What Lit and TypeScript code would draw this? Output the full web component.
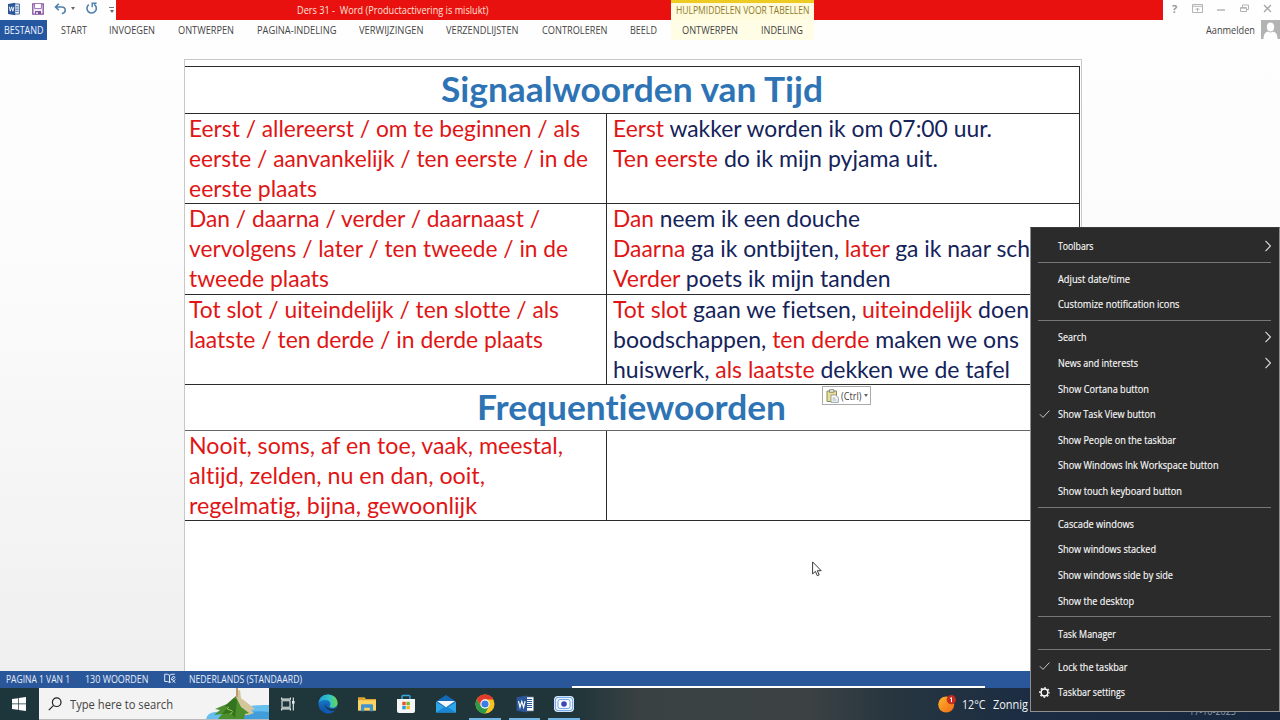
import { LitElement, css, html, nothing, svg } from "lit";
import { customElement, property } from "lit/decorators.js";

// Text that is condensed or widened to fill a known width
@customElement("fit-text")
export class FitText extends LitElement {
  @property({ type: Number }) width = 0;

  firstUpdated() {
    const inner = this.renderRoot.querySelector("span")!;
    const natural = inner.getBoundingClientRect().width;
    if (!natural || !this.width) return;
    inner.style.transform = `scaleX(${this.width / natural})`;
    this.style.width = `${this.width}px`;
  }

  render() {
    return html`<span><slot></slot></span>`;
  }

  static styles = css`
    :host {
      display: block;
      flex: none;
      white-space: nowrap;
    }
    span {
      display: inline-block;
      transform-origin: 0 50%;
    }
  `;
}

const fit = (text: string, width: number) => html`<fit-text width=${width}>${text}</fit-text>`;

const tabs: [string, number][] = [
  ["START", 26],
  ["INVOEGEN", 46],
  ["ONTWERPEN", 56],
  ["PAGINA-INDELING", 79.5],
  ["VERWIJZINGEN", 64.5],
  ["VERZENDLIJSTEN", 72.5],
  ["CONTROLEREN", 65.5],
  ["BEELD", 27],
];

type Line = { w: number; parts: string[] };

// Parts alternate between signal words (red) and plain words (navy)
const rows: { left: [string, number][]; right: Line[]; tall?: boolean }[] = [
  {
    left: [
      ["Eerst / allereerst / om te beginnen / als", 391],
      ["eerste / aanvankelijk / ten eerste / in de", 399],
      ["eerste plaats", 128],
    ],
    right: [
      { w: 379, parts: ["Eerst", " wakker worden ik om 07:00 uur."] },
      { w: 325, parts: ["Ten eerste", " do ik mijn pyjama uit."] },
    ],
  },
  {
    tall: true,
    left: [
      ["Dan / daarna / verder / daarnaast /", 351],
      ["vervolgens / later / ten tweede / in de", 379],
      ["tweede plaats", 140],
    ],
    right: [
      { w: 247, parts: ["Dan", " neem ik een douche"] },
      { w: 417, parts: ["Daarna", " ga ik ontbijten, ", "later", " ga ik naar sch"] },
      { w: 277.5, parts: ["Verder", " poets ik mijn tanden"] },
    ],
  },
  {
    left: [
      ["Tot slot / uiteindelijk / ten slotte / als", 370],
      ["laatste / ten derde / in derde plaats", 354],
    ],
    right: [
      { w: 416, parts: ["Tot slot", " gaan we fietsen, ", "uiteindelijk", " doen"] },
      { w: 406, parts: ["", "boodschappen, ", "ten derde", " maken we ons"] },
      { w: 397, parts: ["", "huiswerk, ", "als laatste", " dekken we de tafel"] },
    ],
  },
];

const frequency: [string, number][] = [
  ["Nooit, soms, af en toe, vaak, meestal,", 374],
  ["altijd, zelden, nu en dan, ooit,", 296],
  ["regelmatig, bijna, gewoonlijk", 288],
];

type Item = { text: string; w: number; arrow?: boolean; icon?: "check" | "gear" };

const groups: Item[][] = [
  [{ text: "Toolbars", w: 35.5, arrow: true }],
  [
    { text: "Adjust date/time", w: 72 },
    { text: "Customize notification icons", w: 121.5 },
  ],
  [
    { text: "Search", w: 28.5, arrow: true },
    { text: "News and interests", w: 80, arrow: true },
    { text: "Show Cortana button", w: 91 },
    { text: "Show Task View button", w: 97.5, icon: "check" },
    { text: "Show People on the taskbar", w: 118 },
    { text: "Show Windows Ink Workspace button", w: 160.5 },
    { text: "Show touch keyboard button", w: 124 },
  ],
  [
    { text: "Cascade windows", w: 76 },
    { text: "Show windows stacked", w: 98 },
    { text: "Show windows side by side", w: 115 },
    { text: "Show the desktop", w: 76 },
  ],
  [{ text: "Task Manager", w: 58 }],
  [
    { text: "Lock the taskbar", w: 69.5, icon: "check" },
    { text: "Taskbar settings", w: 67, icon: "gear" },
  ],
];

const checkIcon = svg`<path d="M.8 5.2 4 8.4 10.4 1.6" fill="none" stroke="#c8c8c8" stroke-width="1"/>`;
const gearIcon = svg`
  <circle cx="5.5" cy="5.5" r="3.4" fill="none" stroke="#fff" stroke-width="1.5"/>
  <circle cx="5.5" cy="5.5" r="4.6" fill="none" stroke="#fff" stroke-width="1.4" stroke-dasharray="1.8 1.81" stroke-dashoffset=".9"/>`;

const wordSmall = html`<svg width="14" height="14" viewBox="0 0 14 14">
  <path d="M7 2h5.4v10H7z" fill="#fff" stroke="#2b579a" stroke-width=".9"/>
  <path d="M8.5 4.3h3M8.5 6h3M8.5 7.7h3M8.5 9.4h3" stroke="#2b579a" stroke-width=".8"/>
  <path d="M1 2 8.2.8v12.4L1 12z" fill="#2b579a"/>
  <path d="m2.3 4.7 1 4.5 1.3-4.4L5.9 9.2l1-4.5" fill="none" stroke="#fff" stroke-width=".9"/>
</svg>`;

const saveIcon = html`<svg width="12" height="12" viewBox="0 0 12 12">
  <path d="M.8.8h10.4v10.4H.8z" fill="#f7f1fb" stroke="#80509c" stroke-width="1.3"/>
  <path d="M2.6 1v4.6h6.8V1" fill="#fff" stroke="#80509c" stroke-width=".8"/>
  <path d="M3 11V8h6v3z" fill="#80509c"/><path d="M4.3 9h1.4v2H4.3z" fill="#fff"/>
</svg>`;

const undoIcon = html`<svg width="13" height="12" viewBox="0 0 13 12">
  <path d="M4.8.8 1.5 4 4.8 7.3M1.8 4h5.7c5 0 4.8 6 .3 6.6" fill="none" stroke="#4f80ac" stroke-width="1.6"/>
</svg>`;

const redoIcon = html`<svg width="13" height="13" viewBox="0 0 13 13">
  <path d="M3.8 2.6a4.7 4.7 0 1 0 5.4-.2" fill="none" stroke="#4f80ac" stroke-width="1.6"/>
  <path d="M7.2 5.3V1.2h4.4" fill="none" stroke="#4f80ac" stroke-width="1.4"/>
</svg>`;

const taskIcons = [
  // task view
  html`<svg width="16" height="16" viewBox="0 0 16 16" fill="none" stroke="#e8eeee" stroke-width="1.1">
    <path d="M2 4.8h8v6.4H2zM1.6 1.5v1.6h8.8V1.5M1.6 14.5v-1.6h8.8v1.6M13.3 1.5v13"/>
    <path d="M12 5h2.6v2.6H12z" fill="#e8eeee" stroke="none"/>
  </svg>`,
  // edge
  html`<svg width="20" height="20" viewBox="0 0 20 20">
    <defs>
      <linearGradient id="edge-a" x1="0" x2="1"><stop stop-color="#1b9de2"/><stop offset=".6" stop-color="#36c5c0"/><stop offset="1" stop-color="#67d84c"/></linearGradient>
      <linearGradient id="edge-b" x2="0" y2="1"><stop stop-color="#1b8ad8"/><stop offset="1" stop-color="#114a9c"/></linearGradient>
    </defs>
    <circle cx="10" cy="10" r="9.6" fill="url(#edge-b)"/>
    <path d="M.5 9C1 3.6 5 .4 10 .4c5.6 0 9.6 4 9.6 8.5 0 3-2.4 4.8-5 4.8-2 0-3.3-.7-3-1.5.5-.9.8-1.4.8-2.3C12.4 7.5 10 6 7.2 6 4 6 1.5 7.4.5 9z" fill="url(#edge-a)"/>
    <path d="M7.4 9.8C6.7 14 10 17.4 14.6 16.8c1.4-.2 2.6-.6 3.4-1.2C16.2 18.3 13.3 19.6 10 19.6 6 19 3.7 14.6 7.4 9.8z" fill="#0f5bb5"/>
    <path d="M9 8.6c-1.5 1.4-1.4 4 1 5.4 3 1.7 6.5 1.4 8.9-.2l1.1 1.4-1.8 1C13.5 18 8 15.5 7.4 11.5z" fill="#1f3338"/>
  </svg>`,
  // explorer
  html`<svg width="18" height="16" viewBox="0 0 18 16">
    <path d="M0 1.2h6.5L8 3h10v11.5H0z" fill="#dca52f"/>
    <path d="M0 4.2h18v10.3H0z" fill="#fcd363"/>
    <path d="M3 15.2V9.2q0-1 1-1h10q1 0 1 1v6h-3.2v-3.4H6.2v3.4z" fill="#3f93cf"/>
  </svg>`,
  // store
  html`<svg width="18" height="20" viewBox="0 0 18 20">
    <path d="M5 6V2.5q0-1 1-1h6q1 0 1 1V6" fill="none" stroke="#35a8df" stroke-width="1.4"/>
    <path d="M0 5h18v12q0 2-2 2H2q-2 0-2-2z" fill="#f4f6f6"/>
    <path d="M5.3 7.8h3.4v3.4H5.3z" fill="#e9502c"/><path d="M9.4 7.8h3.4v3.4H9.4z" fill="#78b72a"/>
    <path d="M5.3 11.9h3.4v3.4H5.3z" fill="#249edb"/><path d="M9.4 11.9h3.4v3.4H9.4z" fill="#f5b719"/>
  </svg>`,
  // mail
  html`<svg width="20" height="18" viewBox="0 0 20 18">
    <path d="M0 6.5 10 0l10 6.5V17H0z" fill="#1468b4"/>
    <path d="M0 6.8 10 13l10-6.2V17.5H0z" fill="#2da5e8"/>
    <path d="M0 17.5 10 11l10 6.5z" fill="#1a86d3"/>
    <path d="M1 6 19 6 10 12.2z" fill="#f3f9fd"/>
  </svg>`,
  // chrome
  html`<svg width="20" height="20" viewBox="0 0 20 20">
    <circle cx="10" cy="10" r="9.5" fill="#f9c31f"/>
    <path d="M1.77 5.25A9.5 9.5 0 0 0 10 19.5L14 12.3 6 12.3z" fill="#2b9b49"/>
    <path d="M10 5.5h8.4A9.5 9.5 0 0 0 1.77 5.25L6 12z" fill="#e23b2e"/>
    <circle cx="10" cy="10" r="4.7" fill="#fff"/><circle cx="10" cy="10" r="3.6" fill="#3b7de4"/>
  </svg>`,
  // word
  html`<svg width="18" height="18" viewBox="0 0 18 18">
    <path d="M9 2.2h8.3v13.6H9z" fill="#fff" stroke="#b8c7e0" stroke-width=".6"/>
    <path d="M11 4.5h5M11 6.5h5M11 8.5h5M11 10.5h5M11 12.5h5" stroke="#2b579a" stroke-width="1"/>
    <path d="M.5 2.2 11 .5v17L.5 15.8z" fill="#2b579a"/>
    <path d="m2.5 6.2 1.5 6 1.8-5.8L7.6 12.2l1.5-6" fill="none" stroke="#fff" stroke-width="1.2"/>
  </svg>`,
  // recorder
  html`<svg width="20" height="16" viewBox="0 0 20 16">
    <rect width="20" height="16" rx="4" fill="#e9f4ff"/>
    <rect x="1.3" y="1.3" width="17.4" height="13.4" rx="3" fill="none" stroke="#5c9be8" stroke-width="1"/>
    <rect x="4" y="3.6" width="12" height="8.8" rx="2" fill="#fff" stroke="#6f9fe0" stroke-width="1"/>
    <circle cx="10" cy="8" r="2.8" fill="#3949b5"/>
  </svg>`,
];

@customElement("app-root")
export class AppRoot extends LitElement {
  renderTitleBar() {
    return html`
      <div class="titlebar">
        <div class="quick">
          ${wordSmall}${saveIcon}
          <span class="undo">${undoIcon}<i class="caret"></i></span>
          ${redoIcon}
          <span class="more"><i></i><i class="caret"></i></span>
        </div>
        <div class="red title">${fit("Ders 31 - \u00a0Word (Productactivering is mislukt)", 191.5)}</div>
        <div class="tools">${fit("HULPMIDDELEN VOOR TABELLEN", 133.5)}</div>
        <div class="red rest"></div>
        <div class="controls">
          <b>?</b>
          <svg width="11" height="9" viewBox="0 0 11 9" fill="none" stroke="#b4b4b4"><path d="M.5.5h10v8H.5zM.5 2.3h10M3.5 6l2-2 2 2M5.5 4v3.5"/></svg>
          <svg width="8" height="9" viewBox="0 0 8 9" stroke="#b0b0b0" stroke-width="1.4"><path d="M0 6h8"/></svg>
          <svg width="9" height="9" viewBox="0 0 9 9" fill="none" stroke="#b4b4b4"><path d="M.5 3.5h6v4h-6zM2.5 3V1h6v4.5h-2M.5 4.2h6"/></svg>
          <svg width="9" height="9" viewBox="0 0 9 9" stroke="#a5a5a5" stroke-width="1.3"><path d="m1 1 7 7M8 1 1 8"/></svg>
        </div>
      </div>
    `;
  }

  renderTabs() {
    return html`
      <nav class="tabs">
        <div class="file">${fit("BESTAND", 39.5)}</div>
        <div class="tablist">${tabs.map(([t, w]) => fit(t, w))}</div>
        <div class="tooltabs">${fit("ONTWERPEN", 56)}${fit("INDELING", 42)}</div>
        <div class="account">
          ${fit("Aanmelden", 49)}
          <svg width="19" height="19" viewBox="0 0 19 19">
            <path d="M0 0h19v19H0z" fill="#b3b3b3"/>
            <path d="M2.5 19q0-7 4.5-7.5h5q4.5.5 4.5 7.5z" fill="#fff"/>
            <ellipse cx="9.5" cy="7" rx="4.2" ry="5" fill="#fff" stroke="#b3b3b3"/>
          </svg>
        </div>
      </nav>
    `;
  }

  renderTable() {
    return html`
      <div class="table">
        <div class="head first">${fit("Signaalwoorden van Tijd", 382)}</div>
        ${rows.map(
          (row) => html`
            <div class="row ${row.tall ? "tall" : ""}">
              <div class="cell signal">${row.left.map(([t, w]) => fit(t, w))}</div>
              <div class="cell plain">
                ${row.right.map(
                  (line) => html`<fit-text width=${line.w}>${line.parts.map((p, i) =>
                    i % 2 ? p : html`<span class="signal">${p}</span>`
                  )}</fit-text>`
                )}
              </div>
            </div>
          `
        )}
        <div class="head second">${fit("Frequentiewoorden", 309)}</div>
        <div class="row">
          <div class="cell signal">${frequency.map(([t, w]) => fit(t, w))}</div>
          <div class="cell"></div>
        </div>
      </div>
    `;
  }

  renderItem(item: Item) {
    return html`
      <div class="item">
        <svg width="11" height="11" viewBox="0 0 11 11">
          ${item.icon === "check" ? checkIcon : item.icon === "gear" ? gearIcon : nothing}
        </svg>
        ${fit(item.text, item.w)}
        ${item.arrow
          ? html`<svg class="arrow" width="6" height="12" viewBox="0 0 6 12"><path d="m.5.8 5 5.2-5 5.2" fill="none" stroke="#ddd" stroke-width="1.1"/></svg>`
          : nothing}
      </div>
    `;
  }

  renderTaskbar() {
    return html`
      <footer class="taskbar">
        <div class="start">
          <svg width="14" height="14" viewBox="0 0 14 14" fill="#fff">
            <path d="M0 2 6 1.2v5.4H0zM6.7 1.1 14 0v6.6H6.7zM0 7.3h6v5.5L0 12zM6.7 7.3H14V14l-7.3-1.1z"/>
          </svg>
        </div>
        <div class="search">
          <svg width="14" height="14" viewBox="0 0 14 14" fill="none" stroke="#222" stroke-width="1.2">
            <circle cx="8.7" cy="5.2" r="4.3"/><path d="M5.6 8.3.8 13.2"/>
          </svg>
          ${fit("Type here to search", 103)}
          <svg class="art" width="64" height="31" viewBox="0 0 64 31">
            <path d="M1 31q1-6 9-7 14-1 22-1 10-7 32-6v14z" fill="#67bff0"/>
            <path d="M32 29q14-8 32-5v7H32z" fill="#429ddb"/>
            <path d="M31 3l4-1 1 8 14 11-4 1 3 3q-8 4-16 1z" fill="#d4c59b"/>
            <path d="M31 8 22 16l-12 5 5 1-6 5 8-1-4 5h26l1-5 4-1-8-6-4-8z" fill="#4c8f2c"/>
            <path d="M29 10 20 18l3 1-6 7 9-1 4 5 2-18z" fill="#35741f"/>
            <path d="M31 0h2v9h-2z" fill="#bf9872"/>
            <path d="M24 19q-4 2 1 3t0 4" fill="none" stroke="#a6c957"/>
          </svg>
        </div>
        <div class="apps">
          ${taskIcons.map((icon, i) => html`<div class="app ${i > 4 ? "open" : ""}">${icon}</div>`)}
        </div>
        <div class="weather">
          <svg width="18" height="18" viewBox="0 0 18 18">
            <defs><linearGradient id="sun" x2="1" y2="1"><stop stop-color="#ffb52b"/><stop offset="1" stop-color="#f06a16"/></linearGradient></defs>
            <circle cx="8.2" cy="9.5" r="8" fill="url(#sun)"/>
            <circle cx="13.3" cy="4.7" r="4.6" fill="#c52b1e"/>
            <path d="m12 3.6 1.5-1v4.6" fill="none" stroke="#fff" stroke-width="1"/>
          </svg>
          ${fit("12°C", 23.5)}${fit("Zonnig", 35)}
        </div>
        <div class="date">${fit("17-10-2023", 47)}</div>
      </footer>
    `;
  }

  render() {
    return html`
      ${this.renderTitleBar()} ${this.renderTabs()}
      <main class="workspace">
        <div class="page">${this.renderTable()}</div>
      </main>
      <div class="status">
        ${fit("PAGINA 1 VAN 1", 64)}${fit("130 WOORDEN", 63.5)}
        <svg width="12" height="11" viewBox="0 0 12 11" fill="none" stroke="#dfe9f8">
          <path d="M5.5 9.5Q3.5 8 .7 8.5V1.2Q3.5.8 5.5 2.2zM5.5 2.2Q7.5.8 10.8 1.2M5.5 9.5 7 8.8M7.5 5.5l2-2.5 1.5 1.5-3.2 2.5zM8.3 9.5 11.3 6.5M8.5 6.8l2.7 3"/>
        </svg>
        ${fit("NEDERLANDS (STANDAARD)", 113)}
        <div class="strip"></div>
      </div>
      ${this.renderTaskbar()}

      <div class="paste">
        <svg width="13" height="14" viewBox="0 0 13 14">
          <path d="M1 2h9.5v10.5H1z" fill="#e9df8e" stroke="#8d8c57"/>
          <path d="M3.5.7h4.3v2.6H3.5z" fill="#eee" stroke="#777" stroke-width=".8"/>
          <path d="M5 6h4.5l2.8 2.5v4.8H5z" fill="#fff" stroke="#8796a0" stroke-width=".9"/>
          <path d="M6.5 9h3M6.5 11h4" stroke="#8796a0" stroke-width=".8"/>
        </svg>
        ${fit("(Ctrl)", 20.5)}<i class="caret"></i>
      </div>

      <svg class="cursor" width="11" height="16" viewBox="0 0 11 16">
        <path d="M.6.9v12l2.8-2.5 1.9 4.3 1.9-.8-1.9-4.2H9.2z" fill="#fff" stroke="#222" stroke-width=".9"/>
      </svg>

      <div class="menu">
        ${groups.map((g) => html`<div class="group">${g.map((i) => this.renderItem(i))}</div>`)}
      </div>
    `;
  }

  static styles = css`
    :host {
      display: flex;
      flex-direction: column;
      position: relative;
      width: 1280px;
      height: 720px;
      overflow: hidden;
      background: #fefefe;
      font-family: "Open Sans", "Noto Sans", sans-serif;
      font-size: 11px;
      font-variant-ligatures: none;
      color: #444;
    }
    svg {
      display: block;
      flex: none;
    }
    .caret {
      border: 2.5px solid transparent;
      border-top: 3px solid #666;
      border-bottom: 0;
    }

    .titlebar {
      display: flex;
      height: 20px;
    }
    .quick {
      display: flex;
      align-items: center;
      box-sizing: border-box;
      width: 116px;
      padding: 0 2px 3px 7px;
      gap: 11px;
    }
    .undo {
      display: flex;
      align-items: center;
      gap: 4px;
      margin: 0 -1px;
    }
    .more {
      display: flex;
      flex-direction: column;
      align-items: center;
      gap: 2px;
      padding-top: 3px;
    }
    .more i:first-child {
      width: 5px;
      height: 1px;
      background: #777;
    }
    .red {
      background: #e8110f;
    }
    .title {
      box-sizing: border-box;
      width: 555px;
      padding-left: 181px;
      line-height: 20px;
      color: #ffe2da;
    }
    .tools {
      box-sizing: border-box;
      width: 143px;
      padding-left: 5px;
      border-top: 3px solid #eecb22;
      background: #fffbdc;
      color: #8c7a2c;
      font-size: 10px;
      line-height: 15px;
    }
    .rest {
      width: 349px;
    }
    .controls {
      display: flex;
      flex: 1;
      align-items: center;
      justify-content: space-between;
      padding: 0 8px 3px 9px;
      color: #999;
    }
    .controls b {
      font-size: 11px;
    }

    .tabs {
      display: flex;
      height: 20px;
      line-height: 20px;
    }
    .file {
      box-sizing: border-box;
      width: 47px;
      padding-left: 4px;
      background: #2557a0;
      color: #f0f5ff;
    }
    .tablist {
      display: flex;
      box-sizing: border-box;
      width: 624px;
      padding-left: 13.5px;
      gap: 22.8px;
    }
    .tooltabs {
      display: flex;
      box-sizing: border-box;
      width: 143px;
      padding-left: 10.5px;
      gap: 23px;
      background: #fffde6;
    }
    .account {
      display: flex;
      gap: 6px;
      margin-left: auto;
      line-height: 19px;
    }

    .workspace {
      display: flex;
      height: 631px;
      background: linear-gradient(#fefefe, #fbfbfb 40%, #efefef);
    }
    .page {
      box-sizing: border-box;
      width: 898px;
      margin: 19px 0 0 184px;
      padding-top: 6px;
      border: 1px solid #c8c8c8;
      border-bottom: 0;
      background: #fff;
    }
    .table {
      width: 894px;
      border: 1px solid #2b2b2b;
      border-width: 1px 1px 0 0;
      font-family: Lato, Carlito, sans-serif;
      font-size: 23px;
      line-height: 30px;
    }
    .head {
      display: flex;
      justify-content: center;
      box-sizing: border-box;
      height: 47px;
      border-bottom: 1px solid #2b2b2b;
      color: #2e74b5;
      font-size: 34.5px;
      font-weight: 700;
      line-height: 43px;
    }
    .head.second {
      height: 46px;
      padding-right: 1px;
      border-bottom-color: #666;
    }
    .row {
      display: grid;
      grid-template-columns: 421px 1fr;
      box-sizing: border-box;
      height: 90px;
      border-bottom: 1px solid #2b2b2b;
    }
    .row.tall {
      height: 91px;
    }
    .cell {
      padding-left: 4.4px;
    }
    .cell + .cell {
      padding-left: 6px;
      border-left: 1px solid #2b2b2b;
    }
    .cell fit-text:first-child {
      margin-top: -1px;
    }
    .signal {
      color: #e01515;
    }
    .plain {
      color: #14235a;
    }

    .status {
      display: flex;
      position: relative;
      height: 17px;
      padding-left: 6px;
      background: #2a579a;
      color: #e6eefb;
      font-size: 10px;
      line-height: 16px;
    }
    .status fit-text + fit-text {
      margin-left: 15px;
    }
    .status svg {
      margin: 2px 13px 0 15px;
    }
    .strip {
      position: absolute;
      left: 572px;
      top: 15px;
      width: 413px;
      height: 2px;
      background: #fff;
    }

    .taskbar {
      display: flex;
      height: 32px;
      background: linear-gradient(90deg, #1d363b, #20353a 45%, #3a4142 50%, #3c4244 63%, #26353f 70%, #1c2d43 80%, #17273d);
      color: #f4f4f4;
    }
    .start {
      display: grid;
      place-items: center;
      width: 38px;
      padding-right: 1px;
    }
    .search {
      display: flex;
      align-items: center;
      box-sizing: border-box;
      width: 229.5px;
      padding-left: 9px;
      gap: 8px;
      background: #f3f3f3;
      border-bottom: 1px solid #bbb;
      color: #444;
      font-size: 13px;
    }
    .art {
      margin-left: auto;
    }
    .apps {
      display: flex;
    }
    .app {
      display: grid;
      place-items: center;
      position: relative;
      width: 39.4px;
    }
    .open::after {
      content: "";
      position: absolute;
      left: 4px;
      right: 4px;
      bottom: 0;
      height: 2px;
      background: #72b5e4;
    }
    .weather {
      display: flex;
      align-items: center;
      margin-left: 354.5px;
      gap: 7px;
      font-size: 12.5px;
    }
    .weather svg {
      margin-right: -1px;
    }
    .date {
      margin-left: 161px;
      padding-top: 16px;
      color: #8f98a5;
      font-size: 10px;
      line-height: 14px;
    }

    .paste {
      display: flex;
      align-items: center;
      position: absolute;
      left: 822px;
      top: 386px;
      box-sizing: border-box;
      width: 49px;
      height: 19px;
      padding-left: 3px;
      gap: 2px;
      border: 1px solid #aaa;
      background: #fff;
      font-size: 10px;
    }
    .cursor {
      position: absolute;
      left: 812px;
      top: 561px;
    }

    .menu {
      position: absolute;
      left: 1030px;
      top: 227px;
      box-sizing: border-box;
      width: 250px;
      height: 485px;
      padding: 5.1px 8px 0 7px;
      border: 1px solid #8d8f91;
      border-top-color: #3c3c3c;
      background: #2b2b2b;
      color: #fafafa;
      font-size: 10px;
      font-weight: 500;
      -webkit-text-stroke: 0.15px;
    }
    .group + .group {
      margin-top: 3px;
      padding-top: 3.35px;
      border-top: 1px solid #777;
    }
    .item {
      display: flex;
      align-items: center;
      height: 25.6px;
      padding-left: 0.6px;
      gap: 8.2px;
    }
    .arrow {
      margin-left: auto;
    }
  `;
}
